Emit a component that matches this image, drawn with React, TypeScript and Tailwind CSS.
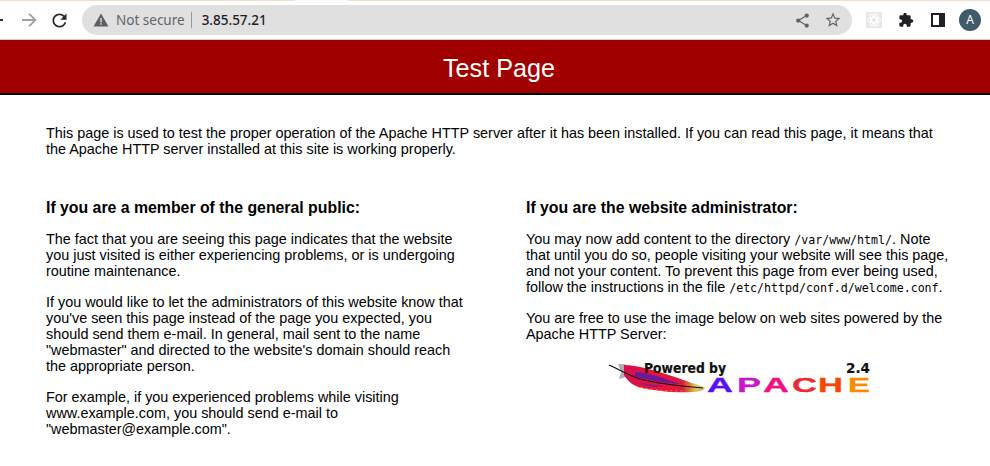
import React from "react";

function Feather() {
  return (
    <svg width="104" height="36" viewBox="0 0 104 36" className="absolute left-0 top-0">
      <defs>
        <linearGradient id="fg" x1="0" y1="0" x2="1" y2="0">
          <stop offset="0" stopColor="#d4104e" />
          <stop offset="0.45" stopColor="#ea1438" />
          <stop offset="0.72" stopColor="#d81c40" />
          <stop offset="0.8" stopColor="#e06a30" />
          <stop offset="0.87" stopColor="#d8c050" />
          <stop offset="1" stopColor="#d8cc70" />
        </linearGradient>
      </defs>
      <path d="M10 6 L17 6 L18 19 L11 21 L13 14Z" fill="#a9b0b8" />
      <path d="M16 7 C30 7 52 14 70 20 C80 24 92 27 97 30 C96 33 90 34 84 34 C68 35 44 33 30 29 C24 27 18 21 16 17 Z" fill="url(#fg)" />
      <path d="M28 14 C42 15 58 21 72 26 C56 25 40 22 26 18Z" fill="#6a1a9c" />
      <path d="M32 25 C40 26 48 27 56 28 C48 30 40 29 32 25Z" fill="#8a1a80" />
      <path d="M28 28 C42 32 58 33 76 33" stroke="#f0a030" strokeWidth="0.8" strokeDasharray="2 3" fill="none" />
      <path d="M1 7 C10 11 20 17 32 21 C50 26 72 28 95 30" stroke="#120c10" strokeWidth="1.2" fill="none" />
    </svg>
  );
}

function Apache() {
  return (
    <div className="relative mt-[16px] ml-[82px] h-[36px] w-[264px] shrink-0">
      <Feather />
      <svg width="264" height="38" viewBox="0 0 264 38" className="absolute left-0 top-0">
        <text x="36" y="15" fontFamily="'DejaVu Sans', sans-serif" fontWeight="700" fontSize="13.5" fill="#111" stroke="#111" strokeWidth="0.2" textLength="82" lengthAdjust="spacingAndGlyphs">Powered by</text>
        <text x="238" y="15" fontFamily="'DejaVu Sans', sans-serif" fontWeight="700" fontSize="14" fill="#111" stroke="#111" strokeWidth="0.2" textLength="24" lengthAdjust="spacingAndGlyphs">2.4</text>
        <g fontFamily="'Liberation Sans', sans-serif" fontWeight="700" fontSize="19.5">
          <text x="99" y="34" fill="#5a10f0" stroke="#5a10f0" strokeWidth="0.3" textLength="26" lengthAdjust="spacingAndGlyphs">A</text>
          <text x="129" y="34" fill="#c818c8" stroke="#c818c8" strokeWidth="0.3" textLength="24" lengthAdjust="spacingAndGlyphs">P</text>
          <text x="155" y="34" fill="#f01080" stroke="#f01080" strokeWidth="0.3" textLength="26" lengthAdjust="spacingAndGlyphs">A</text>
          <text x="184" y="34" fill="#f02830" stroke="#f02830" strokeWidth="0.3" textLength="25" lengthAdjust="spacingAndGlyphs">C</text>
          <text x="210" y="34" fill="#f84800" stroke="#f84800" strokeWidth="0.3" textLength="25" lengthAdjust="spacingAndGlyphs">H</text>
          <text x="240" y="34" fill="#f88c00" stroke="#f88c00" strokeWidth="0.3" textLength="22" lengthAdjust="spacingAndGlyphs">E</text>
        </g>
      </svg>
    </div>
  );
}

const mono = "font-['DejaVu_Sans_Mono',monospace] text-[11.6px] leading-none";

export default function App() {
  return (
    <div className="h-[466px] w-[990px] overflow-hidden bg-white font-['Liberation_Sans',sans-serif] text-[14.4px] leading-4 text-black">
      <div className="flex h-px">
        <div className="w-[295px] bg-[#fdd9c9]" />
        <div className="w-[53px]" />
        <div className="flex-1 bg-[#fdd9c9]" />
      </div>
      <div className="flex h-[38px] items-center">
        <div className="mr-[18px] h-[2px] w-[3px] bg-[#333]" />
        <svg width="16" height="16" viewBox="0 0 16 16" className="mr-[12px]" fill="none" stroke="#a0a3a6" strokeWidth="1.9">
          <path d="M1 8 H14 M8 1.6 L14.4 8 L8 14.4" />
        </svg>
        <svg width="21" height="21" viewBox="0 0 24 24" className="mr-[12px]"><path fill="#26282b" d="M17.65 6.35A7.958 7.958 0 0 0 12 4c-4.42 0-7.99 3.58-7.99 8s3.57 8 7.99 8c3.73 0 6.84-2.55 7.73-6h-2.08A5.99 5.99 0 0 1 12 18c-3.31 0-6-2.69-6-6s2.69-6 6-6c1.66 0 3.14.69 4.22 1.78L13 11h7V4l-2.35 2.35z"/></svg>
        <div className="flex h-[30px] w-[770px] items-center rounded-full bg-[#e0e0e0] pl-[11px] pr-[10px]">
          <svg width="16" height="14" viewBox="0 0 16 14"><path d="M8 0.5 L15.5 13.5 H0.5 Z" fill="#5c5f63"/><rect x="7.3" y="5" width="1.4" height="4.5" fill="#e0e0e0"/><rect x="7.3" y="10.3" width="1.4" height="1.4" fill="#e0e0e0"/></svg>
          <span className="ml-[7px] font-['Noto_Sans',sans-serif] text-[13.5px] text-[#5f6368]">Not secure</span>
          <span className="ml-[6px] h-[16px] w-px bg-[#9a9a9a]" />
          <span className="ml-[10px] font-['Noto_Sans',sans-serif] text-[13.5px] font-medium text-[#202124]">3.85.57.21</span>
          <div className="ml-auto flex items-center gap-[13px]">
            <svg width="17" height="17" viewBox="0 0 24 24"><path fill="#5f6368" d="M18 16.08c-.76 0-1.44.3-1.96.77L8.91 12.7c.05-.23.09-.46.09-.7s-.04-.47-.09-.7l7.05-4.11c.54.5 1.25.81 2.04.81 1.66 0 3-1.34 3-3s-1.34-3-3-3-3 1.34-3 3c0 .24.04.47.09.7L8.04 9.81C7.5 9.31 6.79 9 6 9c-1.66 0-3 1.34-3 3s1.34 3 3 3c.79 0 1.5-.31 2.04-.81l7.12 4.16c-.05.21-.08.43-.08.65 0 1.61 1.31 2.92 2.92 2.92 1.61 0 2.92-1.31 2.92-2.92s-1.31-2.92-2.92-2.92z"/></svg>
            <svg width="18" height="18" viewBox="0 0 24 24"><path fill="#5f6368" d="M22 9.24l-7.19-.62L12 2 9.19 8.63 2 9.24l5.46 4.73L5.82 21 12 17.27 18.18 21l-1.63-7.03L22 9.24zM12 15.4l-3.76 2.27 1-4.28-3.32-2.88 4.38-.38L12 6.1l1.71 4.04 4.38.38-3.32 2.88 1 4.28L12 15.4z"/></svg>
          </div>
        </div>
        <svg width="16" height="16" viewBox="0 0 16 16" className="ml-[14px]">
          <rect width="16" height="16" fill="#e8e8e8"/>
          <g stroke="#fff" fill="none" strokeWidth="1"><ellipse cx="8" cy="8" rx="6.5" ry="2.6"/><ellipse cx="8" cy="8" rx="6.5" ry="2.6" transform="rotate(60 8 8)"/><ellipse cx="8" cy="8" rx="6.5" ry="2.6" transform="rotate(120 8 8)"/></g>
        </svg>
        <svg width="16" height="16" viewBox="0 0 24 24" className="ml-[16px]"><path fill="#202124" d="M20.5 11H19V7a2 2 0 0 0-2-2h-4V3.5a2.5 2.5 0 0 0-5 0V5H4a2 2 0 0 0-2 2v3.8h1.5a2.7 2.7 0 0 1 0 5.4H2V20a2 2 0 0 0 2 2h3.8v-1.5a2.7 2.7 0 0 1 5.4 0V22H17a2 2 0 0 0 2-2v-4h1.5a2.5 2.5 0 0 0 0-5z"/></svg>
        <div className="ml-[17px] flex h-[14px] w-[14px] border-2 border-[#202124] bg-[#202124]"><div className="h-full w-[6px] bg-white" /></div>
        <div className="ml-[14px] flex h-[22px] w-[22px] items-center justify-center rounded-full bg-[#3f5a6b] font-['Noto_Sans',sans-serif] text-[12px] text-white">A</div>
      </div>
      <div className="h-px bg-[#d0d0d0]" />
      <div className="flex h-[55px] items-center justify-center border-b-2 border-black bg-[#a00000] pl-2 pt-[3px] text-[25.2px] text-white">Test Page</div>

      <div className="px-[46px] pt-[30px]">
        <p className="w-[900px]">This page is used to test the proper operation of the Apache HTTP server after it has been installed. If you can read this page, it means that the Apache HTTP server installed at this site is working properly.</p>
        <div className="mt-[41px] flex">
          <div className="w-[480px] shrink-0 pr-[60px]">
            <h2 className="text-[15.84px] leading-[19px] font-bold">If you are a member of the general public:</h2>
            <p className="mt-[14px]">The fact that you are seeing this page indicates that the website you just visited is either experiencing problems, or is undergoing routine maintenance.</p>
            <p className="mt-[15px]">If you would like to let the administrators of this website know that you've seen this page instead of the page you expected, you should send them e-mail. In general, mail sent to the name "webmaster" and directed to the website's domain should reach the appropriate person.</p>
            <p className="mt-[15px]">For example, if you experienced problems while visiting www.example.com, you should send e-mail to "webmaster@example.com".</p>
          </div>
          <div className="w-[424px] shrink-0">
            <h2 className="text-[15.84px] leading-[19px] font-bold">If you are the website administrator:</h2>
            <p className="mt-[14px]">You may now add content to the directory <span className={mono}>/var/www/html/</span>. Note that until you do so, people visiting your website will see this page, and not your content. To prevent this page from ever being used, follow the instructions in the file <span className={mono}>/etc/httpd/conf.d/welcome.conf</span>.</p>
            <p className="mt-[15px]">You are free to use the image below on web sites powered by the Apache HTTP Server:</p>
            <Apache />
          </div>
        </div>
      </div>
    </div>
  );
}
